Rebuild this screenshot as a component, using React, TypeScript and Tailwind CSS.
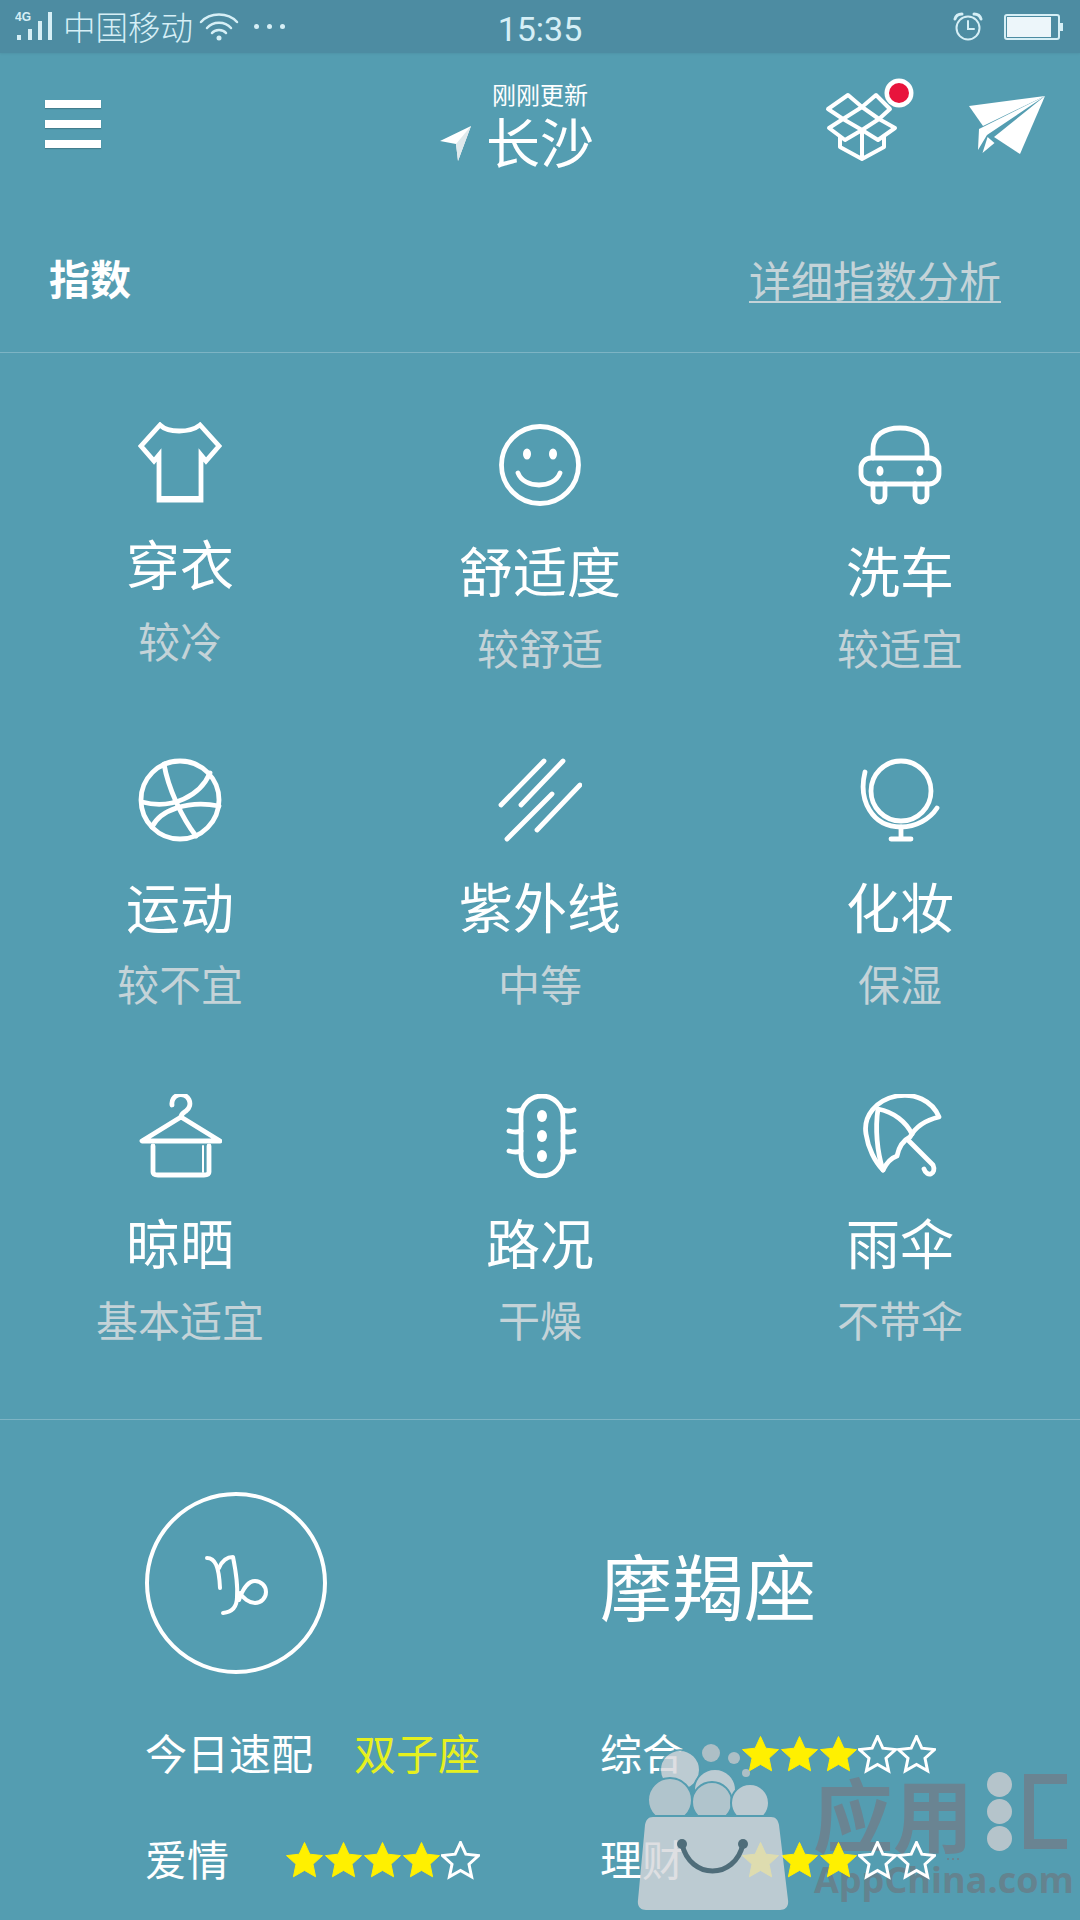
import React from 'react';

const fontCn = { fontFamily: '"Noto Sans CJK SC", "Noto Sans", sans-serif' };

const iconProps = {
  width: 84,
  height: 84,
  viewBox: '0 0 84 84',
  fill: 'none',
  stroke: 'white',
  strokeWidth: 4.8,
  strokeLinecap: 'round' as const,
  strokeLinejoin: 'round' as const,
};

const Tee = () => (
  <svg {...iconProps}>
    <path d="M22 3 C30 11 52 11 62 3 L81 24 L68 39 L63 33 V78 H21 V33 L16 39 L3 24 Z" strokeLinecap="butt" strokeLinejoin="miter" />
    <path d="M21 77 H63" strokeWidth={6} strokeLinecap="butt" />
  </svg>
);

const Smile = () => (
  <svg {...iconProps}>
    <circle cx="42" cy="43" r="38.5" />
    <ellipse cx="29" cy="32" rx="4" ry="5.5" fill="white" stroke="none" />
    <ellipse cx="55" cy="32" rx="4" ry="5.5" fill="white" stroke="none" />
    <path d="M20 51 C26 67 56 67 62 51" />
  </svg>
);

const Car = () => (
  <svg {...iconProps}>
    <path d="M15 36 V27 C15 13 26 6 42 6 C58 6 69 13 69 27 V36" />
    <rect x="3" y="36" width="78" height="26" rx="10" />
    <path d="M15 62 V74 A6 6 0 0 0 27 74 V62" />
    <path d="M57 62 V74 A6 6 0 0 0 69 74 V62" />
    <ellipse cx="22" cy="49" rx="3.5" ry="5" fill="white" stroke="none" />
    <ellipse cx="62" cy="49" rx="3.5" ry="5" fill="white" stroke="none" />
  </svg>
);

const Ball = () => (
  <svg {...iconProps}>
    <circle cx="42" cy="42" r="39" />
    <path d="M26 6 C30 30 44 60 58 78" />
    <path d="M4 44 C34 52 62 38 72 15" />
    <path d="M81 48 C50 42 22 52 14 69" />
  </svg>
);

const Rays = () => (
  <svg {...iconProps}>
    <path d="M46 3 L3 47" />
    <path d="M65 3 L23 47" />
    <path d="M54 36 L9 81" />
    <path d="M82 27 L39 72" />
  </svg>
);

const Mirror = () => (
  <svg {...iconProps}>
    <circle cx="43" cy="33" r="30" />
    <path d="M7 14 C0 42 14 69 43 69 C58 69 72 61 79 50" />
    <path d="M43 69 V80" />
    <path d="M33 81 H53" />
  </svg>
);

const Hanger = () => (
  <svg {...iconProps}>
    <path d="M34 11 A9 9 0 1 1 48 17 C45 19 43 20 43 23" />
    <path d="M43 23 L4 47 H82 Z" />
    <path d="M15 52 V78 Q15 81 20 81 H66 Q71 81 71 78 V52" />
    <path d="M65 52 V78" strokeWidth={2} />
  </svg>
);

const Traffic = () => (
  <svg {...iconProps}>
    <rect x="23" y="2" width="42" height="80" rx="21" />
    <path d="M11 16 Q18 18 23 16 M11 37 Q18 39 23 37 M11 57 Q18 59 23 57 M65 16 Q70 18 76 16 M65 37 Q70 39 76 37 M65 57 Q70 59 76 57" />
    <ellipse cx="44" cy="22" rx="5" ry="6" fill="white" stroke="none" />
    <ellipse cx="44" cy="42" rx="5" ry="6" fill="white" stroke="none" />
    <ellipse cx="44" cy="62" rx="5" ry="6" fill="white" stroke="none" />
  </svg>
);

const Umbrella = () => (
  <svg {...iconProps}>
    <path d="M81 23 C74 6 56 -1 39 2 C18 6 5 22 8 40 C10 54 17 68 25 76 C28 70 33 64 39 62 C41 52 46 46 52 43 C58 32 68 26 81 23 Z" />
    <path d="M20 15 C17 34 19 58 25 76" />
    <path d="M20 15 C36 18 48 28 54 40" />
    <path d="M50 46 L75 71 C79 80 69 84 66 75" />
  </svg>
);

const Capricorn = () => (
  <svg width="70" height="70" viewBox="0 0 70 70" className="ml-[8px] mt-[8px]" fill="none" stroke="white" strokeWidth="4" strokeLinecap="round" strokeLinejoin="round">
    <path d="M2 6 C10 6 14 14 15 36" />
    <path d="M14 16 C17 9 22 5 28 5 C31 20 33 34 32 45 C32 54 28 60 18 61" />
    <path d="M34 48 C38 36 44 29 50 29 A11 11 0 1 1 50 51 C44 51 38 46 35 41" />
  </svg>
);

const Star = ({ on }: { on: boolean }) => (
  <svg width="39" height="39" viewBox="0 0 39 39">
    <polygon
      points="19.5,1.5 24.8,13.2 37.5,14.6 28,23.2 30.6,35.8 19.5,29.4 8.4,35.8 11,23.2 1.5,14.6 14.2,13.2"
      fill={on ? '#fff000' : 'none'}
      stroke={on ? '#fff000' : '#ffffff'}
      strokeWidth={on ? 1 : 3}
      strokeLinejoin="miter"
    />
  </svg>
);

const Stars = ({ n }: { n: number }) => (
  <div className="flex">
    {[0, 1, 2, 3, 4].map((i) => (
      <Star key={i} on={i < n} />
    ))}
  </div>
);

const items = [
  { icon: <Tee />, title: '穿衣', sub: '较冷', tight: true },
  { icon: <Smile />, title: '舒适度', sub: '较舒适' },
  { icon: <Car />, title: '洗车', sub: '较适宜' },
  { icon: <Ball />, title: '运动', sub: '较不宜' },
  { icon: <Rays />, title: '紫外线', sub: '中等' },
  { icon: <Mirror />, title: '化妆', sub: '保湿' },
  { icon: <Hanger />, title: '晾晒', sub: '基本适宜' },
  { icon: <Traffic />, title: '路况', sub: '干燥' },
  { icon: <Umbrella />, title: '雨伞', sub: '不带伞' },
];

const StatusBar = () => (
  <div className="grid grid-cols-3 h-[53px] items-center bg-[#4d8ca2] text-[#d6eff6] shadow-[0_1px_2px_rgba(0,0,0,0.06)]">
    <div className="flex items-center pl-[15px] whitespace-nowrap">
      <svg width="42" height="32" viewBox="0 0 42 32" fill="#d6eff6">
        <text x="0" y="10" fontSize="12" fontWeight="700" fill="#d6eff6" style={{ fontFamily: '"Liberation Sans", sans-serif' }}>4G</text>
        <rect x="2" y="24" width="4" height="5" />
        <rect x="13" y="18" width="4" height="11" />
        <rect x="23" y="10" width="4" height="19" />
        <rect x="33" y="1" width="4" height="28" />
      </svg>
      <span className="ml-[6px] text-[32.5px] leading-none font-light" style={fontCn}>中国移动</span>
      <svg className="ml-[6px]" width="40" height="30" viewBox="0 0 40 30" fill="none" stroke="#d6eff6" strokeWidth="2.5" strokeLinecap="round">
        <path d="M2 10 C11 0 29 0 38 10" />
        <path d="M8 16 C14 9 26 9 32 16" />
        <path d="M13 21 C16 17 24 17 27 21" />
        <circle cx="20" cy="26" r="2.5" fill="#d6eff6" stroke="none" />
      </svg>
      <div className="ml-[15px] flex gap-[8px]">
        <span className="size-[5px] rounded-full bg-[#d6eff6]" />
        <span className="size-[5px] rounded-full bg-[#d6eff6]" />
        <span className="size-[5px] rounded-full bg-[#d6eff6]" />
      </div>
    </div>
    <div className="text-center text-[34px] leading-none pt-[5px]" style={{ fontFamily: 'Roboto, sans-serif' }}>15:35</div>
    <div className="flex items-center justify-end pr-[17px]">
      <svg width="30" height="30" viewBox="0 0 30 30" fill="none" stroke="#d6eff6" strokeWidth="2" strokeLinecap="round">
        <circle cx="15" cy="16" r="11.5" />
        <path d="M15 9 V17 H21" />
        <path d="M2 7 C3 3 6 2 9 2 M28 7 C27 3 24 2 21 2" strokeWidth="3" />
      </svg>
      <div className="ml-[21px] flex items-center">
        <div className="w-[56px] h-[26px] border-2 border-[#d6eff6] rounded-[3px] p-px flex">
          <div className="w-[44px] bg-[#edf6fa]" />
        </div>
        <div className="w-[3px] h-[8px] bg-[#d6eff6]" />
      </div>
    </div>
  </div>
);

const Header = () => (
  <div className="grid grid-cols-3 h-[142px]">
    <div className="pl-[45px] pt-[47px] flex flex-col gap-[12px]">
      <div className="w-[56px] h-[8px] bg-white shadow-[0_1px_1px_rgba(0,0,0,0.2)]" />
      <div className="w-[56px] h-[8px] bg-white shadow-[0_1px_1px_rgba(0,0,0,0.2)]" />
      <div className="w-[56px] h-[8px] bg-white shadow-[0_1px_1px_rgba(0,0,0,0.2)]" />
    </div>
    <div className="flex flex-col items-center pt-[27px] text-white" style={fontCn}>
      <div className="text-[24px] leading-[28px]">刚刚更新</div>
      <div className="flex items-center mr-[46px] mt-[3px]">
        <svg width="32" height="36" viewBox="0 0 32 36" className="mt-[6px]">
          <polygon points="31,0 0,15 16,18 18,35" fill="white" />
          <polygon points="31,0 16,18 18,35" fill="#dfe9ec" />
        </svg>
        <span className="ml-[14px] text-[54px] leading-[60px] whitespace-nowrap">长沙</span>
      </div>
    </div>
    <div className="flex justify-end pr-[31px] pt-[22px] gap-[49px]">
      <svg width="96" height="90" viewBox="0 0 96 90" fill="none" stroke="white" strokeWidth="4" strokeLinejoin="round">
        <g transform="translate(0 15)">
          <polygon points="28,5 42,17 23,29 8,19" />
          <polygon points="56,5 42,17 59,29 70,19" />
          <polygon points="23,29 42,40 25,50 9,38" />
          <polygon points="59,29 42,40 58,50 75,38" />
          <path d="M20 46 V57 L42 69 L64 57 V46 M42 40 V69" />
        </g>
        <circle cx="79" cy="18" r="14.5" fill="white" stroke="none" />
        <circle cx="79" cy="18" r="10" fill="#e8143c" stroke="none" />
      </svg>
      <svg width="84" height="70" viewBox="0 0 84 70" className="mt-[15px]" fill="white">
        <polygon points="4,16 80,6 18,36" />
        <polygon points="80,6 55,64 29,47" />
        <polygon points="80,6 14,39 13,60 22,45" />
        <polygon points="17.5,63 29.5,53 22.6,47" />
      </svg>
    </div>
  </div>
);

const WatermarkText = () => (
  <div className="absolute left-[630px] top-[1730px] w-[450px] h-[190px] pointer-events-none whitespace-nowrap">
    <div className="absolute left-[183px] top-[39px] flex items-center text-[#6a8492] text-[80px] leading-[84px] font-bold" style={fontCn}>
      <span>应用</span>
      <div className="ml-[14px] flex flex-col gap-[2px]">
        <span className="block size-[25px] rounded-full bg-[#b5c4cb]" />
        <span className="block size-[25px] rounded-full bg-[#b5c4cb]" />
        <span className="block size-[25px] rounded-full bg-[#b5c4cb]" />
      </div>
      <div className="ml-[12px] w-[43px] h-[75px] border-l-[10px] border-y-[10px] border-[#6a8492]" />
    </div>
    <div className="absolute left-[317px] top-[128px] flex gap-[3px]">
      <span className="size-[2px] bg-[#6a8492]" />
      <span className="size-[2px] bg-[#6a8492]" />
      <span className="size-[2px] bg-[#6a8492]" />
    </div>
    <div className="absolute left-[184px] top-[128px] text-[36px] leading-[44px] font-bold text-[#64838f]" style={{ fontFamily: '"Open Sans", sans-serif' }}>
      AppChina.com
    </div>
  </div>
);

const WatermarkBag = () => (
  <svg width="170" height="190" viewBox="0 0 170 190" className="absolute left-[630px] top-[1730px] pointer-events-none">
    <clipPath id="foam">
      <rect x="0" y="0" width="170" height="85" />
    </clipPath>
    <g clipPath="url(#foam)" opacity="0.8" stroke="#549db1" strokeWidth="2">
      <circle cx="50" cy="40" r="20" fill="#d6d7db" />
      <circle cx="85" cy="60" r="21" fill="#d6d7db" />
      <circle cx="40" cy="70" r="22" fill="#c8ced3" />
      <circle cx="82" cy="72" r="20" fill="#c8ced3" />
      <circle cx="120" cy="73" r="19" fill="#d6d7db" />
    </g>
    <circle cx="81" cy="23" r="9" fill="#adbfc6" />
    <circle cx="104" cy="28" r="6" fill="#adbfc6" />
    <circle cx="116" cy="43" r="4" fill="#adbfc6" />
    <path d="M23 87 H141 C146 87 148 90 149 95 L158 170 C159 177 155 180 150 180 H16 C11 180 7 177 8 170 L15 95 C16 90 18 87 23 87 Z" fill="#d6d7db" opacity="0.8" />
    <path d="M52 114 C60 150 105 150 113 114" fill="none" stroke="#4f6d7a" strokeWidth="5" />
    <circle cx="52" cy="114" r="5" fill="#4f6d7a" />
    <circle cx="113" cy="114" r="5" fill="#4f6d7a" />
  </svg>
);

export default function App() {
  return (
    <div className="relative w-[1080px] h-[1920px] overflow-hidden bg-[#549db1]" style={fontCn}>
      <StatusBar />
      <Header />

      <div className="flex items-center justify-between h-[158px] pt-[9px] pl-[49px] pr-[79px] border-b border-[#7db4c4]">
        <span className="text-[41px] font-bold text-white">指数</span>
        <span className="text-[42px] text-[#c4d3d8] underline decoration-2 underline-offset-[4px]">详细指数分析</span>
      </div>

      <div className="grid grid-cols-3 content-start gap-y-[86px] pt-[69px] h-[1067px] border-b border-[#7db4c4]">
        {items.map((it) => (
          <div key={it.title} className="flex flex-col items-center">
            {it.icon}
            <div className={`${it.tight ? 'mt-[27px]' : 'mt-[34px]'} h-[60px] text-[54px] leading-[60px] text-white`}>{it.title}</div>
            <div className="mt-[22px] h-[50px] text-[42px] leading-[50px] text-[#c4d3d8]">{it.sub}</div>
          </div>
        ))}
      </div>

      <WatermarkText />

      <div className="relative pt-[72px] pl-[145px] text-white">
        <div className="flex items-center">
          <div className="size-[182px] rounded-full border-[4px] border-white flex items-center justify-center">
            <Capricorn />
          </div>
          <div className="ml-[273px] mt-[2px] text-[72px] leading-[84px]">摩羯座</div>
        </div>
        <div className="mt-[50px] flex items-center h-[60px]">
          <div className="w-[455px] flex items-center text-[42px] pb-[6px]">
            <span>今日速配</span>
            <span className="ml-[41px] text-[#e6f01e]">双子座</span>
          </div>
          <span className="w-[141px] text-[42px] pb-[6px]">综合</span>
          <Stars n={3} />
        </div>
        <div className="mt-[46px] flex items-center h-[60px]">
          <span className="w-[140px] text-[42px] pb-[6px]">爱情</span>
          <div className="w-[315px]">
            <Stars n={4} />
          </div>
          <span className="w-[141px] text-[42px] pb-[6px]">理财</span>
          <Stars n={3} />
        </div>
      </div>

      <WatermarkBag />
    </div>
  );
}
